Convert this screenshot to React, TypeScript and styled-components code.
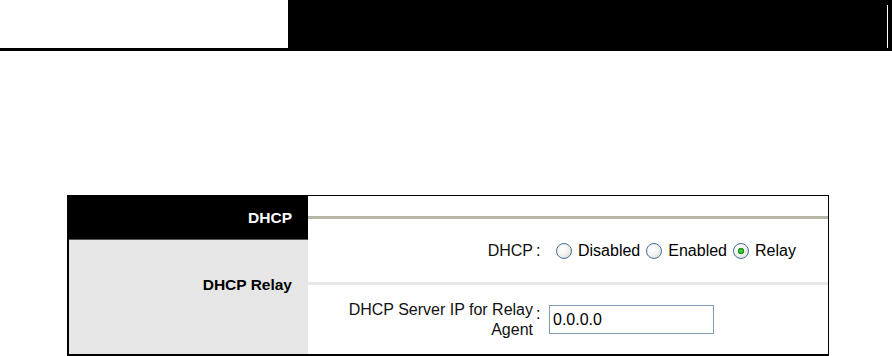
import { useState } from "react";
import styled, { createGlobalStyle } from "styled-components";

const GlobalStyle = createGlobalStyle`
  html, body {
    margin: 0;
    padding: 0;
    background: #fff;
  }
  body {
    font-family: "Liberation Sans", Arial, sans-serif;
    color: #000;
  }
`;

type Mode = "disabled" | "enabled" | "relay";

const options: { value: Mode; label: string }[] = [
  { value: "disabled", label: "Disabled" },
  { value: "enabled", label: "Enabled" },
  { value: "relay", label: "Relay" },
];

const App = () => {
  const [mode, setMode] = useState<Mode>("relay");
  const [server, setServer] = useState("0.0.0.0");

  return (
    <Page>
      <GlobalStyle />
      <TopBar>
        <TopBlank />
        <TopBlock>
          <TopRule />
        </TopBlock>
      </TopBar>

      <Panel>
        <Side>
          <SideHead>DHCP</SideHead>
          <SideBody>DHCP Relay</SideBody>
        </Side>

        <Main>
          <MainHead />
          <Row $height={63} $divider>
            <Label>DHCP</Label>
            <Colon>:</Colon>
            <Value>
              <Options>
                {options.map((o) => (
                  <Option key={o.value}>
                    <Radio
                      type="radio"
                      name="dhcp"
                      checked={mode === o.value}
                      onChange={() => setMode(o.value)}
                    />
                    {o.label}
                  </Option>
                ))}
              </Options>
            </Value>
          </Row>
          <Row>
            <Label>
              DHCP Server IP for Relay
              <br />
              Agent
            </Label>
            <Colon $raise>:</Colon>
            <Value>
              <TextInput
                value={server}
                onChange={(e) => setServer(e.target.value)}
              />
            </Value>
          </Row>
        </Main>
      </Panel>
    </Page>
  );
};

export default App;

const Page = styled.div`
  width: 892px;
  height: 356px;
  overflow: hidden;
`;

const TopBar = styled.div`
  display: flex;
  height: 48px;
  border-bottom: 3px solid #000;
`;

const TopBlank = styled.div`
  width: 288px;
  background: #fff;
`;

const TopBlock = styled.div`
  flex: 1;
  background: #000;

  display: flex;
  justify-content: flex-end;
  align-items: flex-end;
  padding-right: 4px;
`;

const TopRule = styled.div`
  width: 1px;
  height: 43px;
  background: #fff;
`;

const Panel = styled.div`
  margin: 144px 0 0 67px;
  width: 762px;
  height: 161px;
  box-sizing: border-box;

  border-top: 1px solid #000;
  border-right: 1px solid #000;
  border-bottom: 2px solid #000;
  border-left: 2px solid #000;

  display: flex;
  font-size: 16px;
`;

const Side = styled.div`
  width: 239px;
  display: flex;
  flex-direction: column;
  font-size: 15.5px;
  font-weight: 700;
`;

const SideHead = styled.div`
  height: 43px;
  background: #000;
  color: #fff;

  display: flex;
  align-items: center;
  justify-content: flex-end;
  padding-right: 16px;
`;

const SideBody = styled.div`
  flex: 1;
  background: #e6e6e6;
  border-top: 1px solid #555;
  line-height: 20px;

  text-align: right;
  padding: 35px 16px 0 0;
`;

const Main = styled.div`
  flex: 1;
  display: flex;
  flex-direction: column;
  background: #fff;
`;

const MainHead = styled.div`
  height: 20px;
  border-bottom: 3px solid #b6b4a5;
`;

const Row = styled.div<{ $height?: number; $divider?: boolean }>`
  display: flex;
  align-items: center;
  ${(p) => (p.$height ? `height: ${p.$height}px;` : "flex: 1;")}
  ${(p) => (p.$divider ? "border-bottom: 3px solid #e8e8e8;" : "")}
`;

const Label = styled.div`
  width: 225px;
  text-align: right;
  line-height: 20px;
  color: #111;
`;

const Colon = styled.div<{ $raise?: boolean }>`
  width: 11px;
  padding-left: 3px;
  line-height: 20px;
  ${(p) => (p.$raise ? "margin-bottom: 12px;" : "")}
`;

const Value = styled.div`
  flex: 1;
  display: flex;
  align-items: center;
`;

const Options = styled.div`
  display: flex;
  align-items: center;
  gap: 6px;
  margin-left: 9px;
`;

const Option = styled.label`
  display: inline-flex;
  align-items: center;
  gap: 6px;
  cursor: pointer;
`;

const Radio = styled.input`
  appearance: none;
  margin: 0;
  width: 16px;
  height: 16px;
  box-sizing: border-box;
  border-radius: 50%;
  border: 1px solid #46709c;
  background: radial-gradient(
    circle at 35% 35%,
    #ffffff 0%,
    #f3f3f0 45%,
    #d5d5cc 100%
  );
  cursor: pointer;

  &:checked {
    background: radial-gradient(circle, #6fd66f 0, #22a322 2.2px, #1d961d 3px, transparent 3.6px),
      radial-gradient(circle at 35% 35%, #ffffff 0%, #f3f3f0 45%, #d5d5cc 100%);
  }
`;

const TextInput = styled.input`
  margin-left: 2px;
  width: 165px;
  height: 29px;
  box-sizing: border-box;
  border: 1px solid #7f9db9;
  padding: 0 3px;

  font-family: "Liberation Sans", Arial, sans-serif;
  font-size: 16px;
  color: #000;
  outline: none;
`;
